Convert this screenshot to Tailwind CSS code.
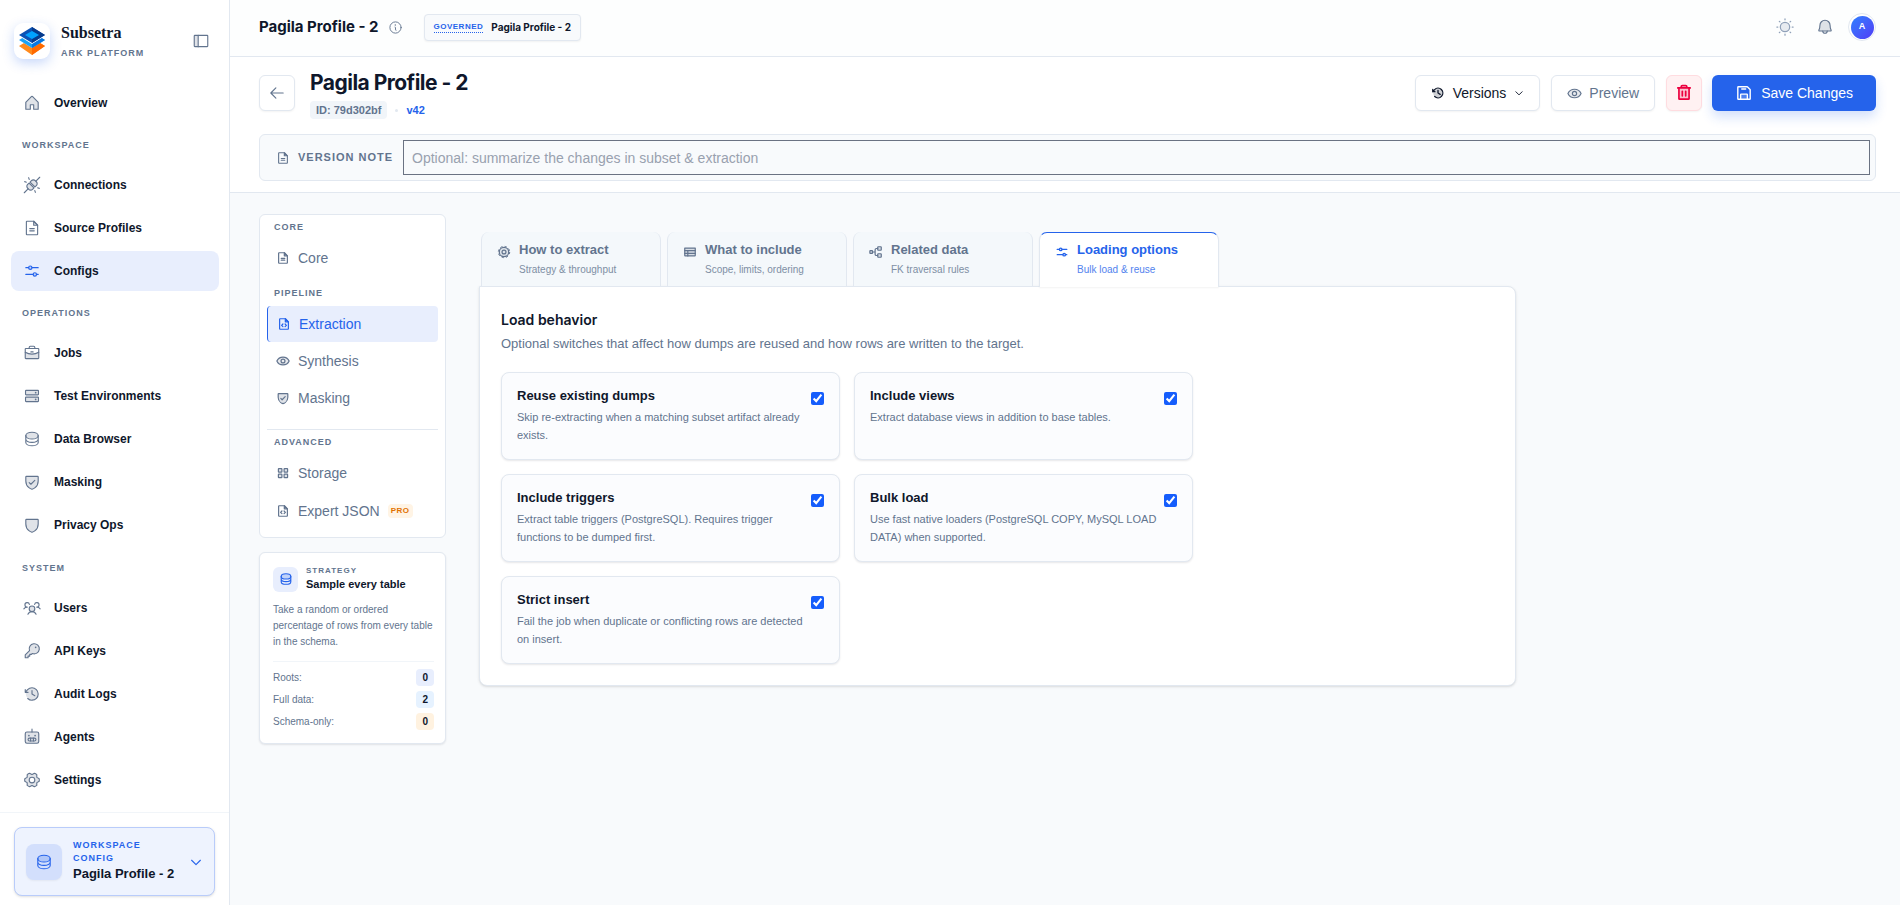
<!DOCTYPE html>
<html lang="en">
  <head>
    <meta charset="UTF-8">
    <meta name="viewport" content="width=device-width, initial-scale=1.0">
    <title>Pagila Profile - 2 | Subsetra</title>
    <script src="https://cdn.jsdelivr.net/npm/@tailwindcss/browser@4"></script>
  </head>
  <body class="flex min-h-screen bg-[#f8fafc] fill-none stroke-current font-['Liberation_Sans',Arial,sans-serif] text-slate-900 [stroke-linecap:round] [stroke-linejoin:round] [stroke-width:16]">

    <!-- icon sprite, stroke settings are inherited from body -->
    <svg class="hidden">
      <symbol id="house" viewBox="0 0 256 256">
        <path fill="currentColor" fill-opacity=".2" d="M104 216v-64h48v64h64v-96a8 8 0 0 0-2.34-5.66l-80-80a8 8 0 0 0-11.32 0l-80 80A8 8 0 0 0 40 120v96Z"/>
      </symbol>
      <symbol id="plugs" viewBox="0 0 256 256">
        <path fill="currentColor" fill-opacity=".2" d="M86 100l70 70-20 20a38 38 0 0 1-54 0l-16-16a38 38 0 0 1 0-54ZM100 86l70 70 20-20a38 38 0 0 0 0-54l-16-16a38 38 0 0 0-54 0Z"/>
        <path d="M72 184l-54 54M184 72l54-54M88 48L80 24M48 88l-24-8M208 168l24 8M168 208l8 24"/>
      </symbol>
      <symbol id="file-text" viewBox="0 0 256 256">
        <path fill="currentColor" fill-opacity=".2" d="M152 32v56h56Z"/>
        <path d="M200 224H56a8 8 0 0 1-8-8V40a8 8 0 0 1 8-8h96l56 56v128a8 8 0 0 1-8 8ZM96 136h64M96 168h64"/>
      </symbol>
      <symbol id="file-code" viewBox="0 0 256 256">
        <path fill="currentColor" fill-opacity=".2" d="M152 32v56h56Z"/>
        <path d="M200 224H56a8 8 0 0 1-8-8V40a8 8 0 0 1 8-8h96l56 56v128a8 8 0 0 1-8 8ZM148 128l24 24-24 24M108 128l-24 24 24 24"/>
      </symbol>
      <symbol id="sliders" viewBox="0 0 256 256">
        <circle cx="104" cy="80" r="24" fill="currentColor" fill-opacity=".2"/>
        <circle cx="168" cy="176" r="24" fill="currentColor" fill-opacity=".2"/>
        <path d="M128 80h88M40 80h40M192 176h24M40 176h104"/>
      </symbol>
      <symbol id="briefcase" viewBox="0 0 256 256">
        <path stroke="none" fill="currentColor" fill-opacity=".2" d="M128 144a191 191 0 0 1-96-26V200a8 8 0 0 0 8 8h176a8 8 0 0 0 8-8v-82A191 191 0 0 1 128 144Z"/>
        <rect x="32" y="64" width="192" height="144" rx="8"/>
        <path d="M168 64V48a16 16 0 0 0-16-16h-48a16 16 0 0 0-16 16v16M224 118A191 191 0 0 1 128 144a191 191 0 0 1-96-26M112 112h32"/>
      </symbol>
      <symbol id="drives" viewBox="0 0 256 256">
        <rect x="36" y="144" width="184" height="64" rx="8" fill="currentColor" fill-opacity=".2"/>
        <rect x="36" y="48" width="184" height="64" rx="8" fill="currentColor" fill-opacity=".2"/>
        <circle cx="180" cy="80" r="12" stroke="none" fill="currentColor"/>
        <circle cx="180" cy="176" r="12" stroke="none" fill="currentColor"/>
      </symbol>
      <symbol id="database" viewBox="0 0 256 256">
        <ellipse cx="128" cy="80" rx="88" ry="48" fill="currentColor" fill-opacity=".2"/>
        <path d="M40 80v48c0 26.500 39.400 48 88 48s88-21.500 88-48V80M40 128v48c0 26.500 39.400 48 88 48s88-21.500 88-48v-48"/>
      </symbol>
      <symbol id="shield" viewBox="0 0 256 256">
        <path fill="currentColor" fill-opacity=".2" d="M216 112V56a8 8 0 0 0-8-8H48a8 8 0 0 0-8 8v56c0 96 88 120 88 120s88-24 88-120Z"/>
      </symbol>
      <symbol id="shield-check" viewBox="0 0 256 256">
        <path fill="currentColor" fill-opacity=".2" d="M216 112V56a8 8 0 0 0-8-8H48a8 8 0 0 0-8 8v56c0 96 88 120 88 120s88-24 88-120Z"/>
        <path d="M88 136l24 24 56-56"/>
      </symbol>
      <symbol id="users" viewBox="0 0 256 256">
        <circle cx="128" cy="140" r="40" fill="currentColor" fill-opacity=".2"/>
        <path d="M196 116a60 60 0 0 1 48 24M12 140a60 60 0 0 1 48-24M70 216a64 64 0 0 1 116 0M60 116a32 32 0 1 1 31-38M165 78A32 32 0 1 1 196 116"/>
      </symbol>
      <symbol id="key" viewBox="0 0 256 256">
        <path fill="currentColor" fill-opacity=".2" d="M93 123a72 72 0 1 1 40 40L120 176H96v24H72v24H32v-40Z"/>
        <circle cx="180" cy="76" r="12" stroke="none" fill="currentColor"/>
      </symbol>
      <symbol id="history" viewBox="0 0 256 256">
        <circle cx="128" cy="128" r="88" stroke="none" fill="currentColor" fill-opacity=".2"/>
        <path d="M128 80v48l40 24M72 104H32V64M67.600 192A88 88 0 1 0 65.770 65.770C54 77.690 44.280 88.930 32 104"/>
      </symbol>
      <symbol id="robot" viewBox="0 0 256 256">
        <rect x="32" y="56" width="192" height="160" rx="24" fill="currentColor" fill-opacity=".2"/>
        <rect x="72" y="144" width="112" height="40" rx="20"/>
        <path d="M148 144v40M108 144v40M128 56V16"/>
        <circle cx="84" cy="108" r="12" stroke="none" fill="currentColor"/>
        <circle cx="172" cy="108" r="12" stroke="none" fill="currentColor"/>
      </symbol>
      <symbol id="gear" viewBox="0 0 256 256">
        <path fill="currentColor" fill-opacity=".2" fill-rule="evenodd" d="M130.050 206.110c-1.340 0-2.690 0-4 0L94 224a104.610 104.610 0 0 1-34.110-19.200l-.12-36c-.71-1.120-1.380-2.250-2-3.410L25.900 147.240a99.150 99.150 0 0 1 0-38.460l31.840-18.100c.65-1.150 1.320-2.290 2-3.410l.16-36A104.580 104.580 0 0 1 94 32l32 17.890c1.340 0 2.690 0 4 0L162 32a104.610 104.610 0 0 1 34.110 19.200l.12 36c.71 1.120 1.380 2.250 2 3.410l31.850 18.140a99.150 99.150 0 0 1 0 38.460l-31.840 18.100c-.65 1.150-1.320 2.290-2 3.410l-.16 36A104.580 104.580 0 0 1 162 224ZM128 88a40 40 0 1 0 0 80a40 40 0 1 0 0-80Z"/>
      </symbol>
      <symbol id="cog" viewBox="0 0 256 256">
        <circle cx="128" cy="128" r="86" fill="currentColor" fill-opacity=".15"/>
        <circle cx="128" cy="128" r="104" stroke-width="18" stroke-dasharray="40 41.680" stroke-linecap="butt"/>
        <circle cx="128" cy="128" r="36"/>
      </symbol>
      <symbol id="table" viewBox="0 0 256 256">
        <path fill="currentColor" fill-opacity=".2" d="M32 56h192v136a8 8 0 0 1-8 8H40a8 8 0 0 1-8-8Z"/>
        <path d="M32 104h192M32 152h192M88 104v96"/>
      </symbol>
      <symbol id="tree" viewBox="0 0 256 256">
        <rect x="160" y="32" width="64" height="64" rx="8" fill="currentColor" fill-opacity=".2"/>
        <rect x="160" y="160" width="64" height="64" rx="8" fill="currentColor" fill-opacity=".2"/>
        <rect x="16" y="104" width="48" height="48" rx="8" fill="currentColor" fill-opacity=".2"/>
        <path d="M64 128h48M160 192h-24a24 24 0 0 1-24-24V88a24 24 0 0 1 24-24h24"/>
      </symbol>
      <symbol id="squares" viewBox="0 0 256 256">
        <rect x="44" y="48" width="64" height="64" rx="8" fill="currentColor" fill-opacity=".2"/>
        <rect x="148" y="48" width="64" height="64" rx="8" fill="currentColor" fill-opacity=".2"/>
        <rect x="44" y="148" width="64" height="64" rx="8" fill="currentColor" fill-opacity=".2"/>
        <rect x="148" y="148" width="64" height="64" rx="8" fill="currentColor" fill-opacity=".2"/>
      </symbol>
      <symbol id="eye" viewBox="0 0 256 256">
        <path fill="currentColor" fill-opacity=".15" d="M128 56C48 56 16 128 16 128s32 72 112 72 112-72 112-72-32-72-112-72Z"/>
        <circle cx="128" cy="128" r="36"/>
      </symbol>
      <symbol id="trash" viewBox="0 0 256 256">
        <path fill="currentColor" fill-opacity=".2" d="M200 56v152a8 8 0 0 1-8 8H64a8 8 0 0 1-8-8V56"/>
        <path d="M216 56H40M104 104v64M152 104v64M168 56V40a16 16 0 0 0-16-16h-48a16 16 0 0 0-16 16v16"/>
      </symbol>
      <symbol id="floppy" viewBox="0 0 256 256">
        <path d="M216 83V208a8 8 0 0 1-8 8H48a8 8 0 0 1-8-8V48a8 8 0 0 1 8-8h125a8 8 0 0 1 6 2l35 36a8 8 0 0 1 2 5Z"/>
        <path fill="currentColor" fill-opacity=".2" d="M80 216v-64a8 8 0 0 1 8-8h80a8 8 0 0 1 8 8v64"/>
        <path d="M152 72H96"/>
      </symbol>
      <symbol id="sun" viewBox="0 0 256 256">
        <circle cx="128" cy="128" r="60" fill="currentColor" fill-opacity=".2"/>
        <path d="M128 36V24M128 232v-12M36 128H24M232 128h-12M63 63l-7-7M63 193l-7 7M193 63l7-7M193 193l7 7"/>
      </symbol>
      <symbol id="bell" viewBox="0 0 256 256">
        <path fill="currentColor" fill-opacity=".2" d="M56 104a72 72 0 0 1 144 0c0 35.820 8.300 56.600 14.900 68A8 8 0 0 1 208 184H48a8 8 0 0 1-6.880-12C47.710 160.600 56 139.810 56 104Z"/>
        <path d="M96 184a32 32 0 0 0 64 0"/>
      </symbol>
      <symbol id="info" viewBox="0 0 256 256">
        <circle cx="128" cy="128" r="96"/>
        <path d="M120 120a8 8 0 0 1 8 8v40a8 8 0 0 0 8 8"/>
        <circle cx="124" cy="84" r="12" stroke="none" fill="currentColor"/>
      </symbol>
      <symbol id="panel" viewBox="0 0 256 256">
        <path stroke="none" fill="currentColor" fill-opacity=".2" d="M32 48h56v160H32Z"/>
        <rect x="32" y="48" width="192" height="160" rx="8"/>
        <path d="M88 48v160"/>
      </symbol>
      <symbol id="arrow-left" viewBox="0 0 256 256">
        <path d="M216 128H40M112 56l-72 72 72 72"/>
      </symbol>
      <symbol id="caret" viewBox="0 0 256 256">
        <path d="M208 96l-80 80-80-80"/>
      </symbol>
    </svg>

    <!-- sidebar -->
    <aside class="flex w-[230px] shrink-0 flex-col border-r border-slate-200 bg-white">
      <div class="flex items-start px-[14px] pt-[23px]">
        <span class="flex size-9 items-center justify-center rounded-[9px] bg-white shadow-[0_4px_12px_rgba(37,99,235,0.25)]">
          <svg class="h-7 w-[26px] stroke-none" viewBox="0 0 26 28">
            <path fill="#ff8a1c" d="M0 19l5-3 8 5 8-5 5 3-13 9Z"/>
            <path fill="#ff6a00" d="M13 21l8-5 5 3-13 9Z"/>
            <path fill="#1ba3f5" d="M0 13l5-3 8 5 8-5 5 3-13 8Z"/>
            <path fill="#0877e0" d="M13 15l8-5 5 3-13 8Z"/>
            <path fill="#fff" d="M0 9l13 8 13-8v-1H0Z"/>
            <path fill="#0a52b5" d="M13 0l13 8-13 8L0 8Z"/>
            <path fill="#063a8c" d="M13 0l13 8-13 8v-4l6-4-6-4Z"/>
            <path fill="#00a2ff" d="M13 4l7 4-7 4-7-4Z"/>
          </svg>
        </span>
        <div class="ml-[11px] flex-1">
          <p class="font-['Liberation_Serif',serif] text-base leading-5 font-bold">Subsetra</p>
          <p class="text-[9px] leading-5 font-bold tracking-[1px] text-slate-500">ARK PLATFORM</p>
        </div>
        <button class="mt-[5px] mr-px p-1 text-slate-500" aria-label="Collapse sidebar"><svg class="size-[18px]"><use href="#panel"/></svg></button>
      </div>

      <nav class="mt-[20px] flex flex-1 flex-col pr-[10px] pl-[11px] text-[12px] font-bold" aria-label="Main">
        <a href="#" class="flex h-10 items-center gap-[13px] rounded-lg px-[12px]"><svg class="size-[18px] text-slate-500"><use href="#house"/></svg>Overview</a>

        <h2 class="flex h-[42px] items-center px-[11px] pt-1 text-[9px] tracking-[1px] text-slate-500">WORKSPACE</h2>
        <div class="flex flex-col gap-[3px]">
          <a href="#" class="flex h-10 items-center gap-[13px] rounded-lg px-[12px]"><svg class="size-[18px] text-slate-500"><use href="#plugs"/></svg>Connections</a>
          <a href="#" class="flex h-10 items-center gap-[13px] rounded-lg px-[12px]"><svg class="size-[18px] text-slate-500"><use href="#file-text"/></svg>Source Profiles</a>
          <a href="#" class="flex h-10 items-center gap-[13px] rounded-lg bg-[#e8eefd] px-[12px]" aria-current="page"><svg class="size-[18px] text-[#2563eb]"><use href="#sliders"/></svg>Configs</a>
        </div>

        <h2 class="flex h-[42px] items-center px-[11px] pt-1 text-[9px] tracking-[1px] text-slate-500">OPERATIONS</h2>
        <div class="flex flex-col gap-[3px]">
          <a href="#" class="flex h-10 items-center gap-[13px] rounded-lg px-[12px]"><svg class="size-[18px] text-slate-500"><use href="#briefcase"/></svg>Jobs</a>
          <a href="#" class="flex h-10 items-center gap-[13px] rounded-lg px-[12px]"><svg class="size-[18px] text-slate-500"><use href="#drives"/></svg>Test Environments</a>
          <a href="#" class="flex h-10 items-center gap-[13px] rounded-lg px-[12px]"><svg class="size-[18px] text-slate-500"><use href="#database"/></svg>Data Browser</a>
          <a href="#" class="flex h-10 items-center gap-[13px] rounded-lg px-[12px]"><svg class="size-[18px] text-slate-500"><use href="#shield-check"/></svg>Masking</a>
          <a href="#" class="flex h-10 items-center gap-[13px] rounded-lg px-[12px]"><svg class="size-[18px] text-slate-500"><use href="#shield"/></svg>Privacy Ops</a>
        </div>

        <h2 class="flex h-[43px] items-center px-[11px] pt-1 text-[9px] tracking-[1px] text-slate-500">SYSTEM</h2>
        <div class="flex flex-col gap-[3px]">
          <a href="#" class="flex h-10 items-center gap-[13px] rounded-lg px-[12px]"><svg class="size-[18px] text-slate-500"><use href="#users"/></svg>Users</a>
          <a href="#" class="flex h-10 items-center gap-[13px] rounded-lg px-[12px]"><svg class="size-[18px] text-slate-500"><use href="#key"/></svg>API Keys</a>
          <a href="#" class="flex h-10 items-center gap-[13px] rounded-lg px-[12px]"><svg class="size-[18px] text-slate-500"><use href="#history"/></svg>Audit Logs</a>
          <a href="#" class="flex h-10 items-center gap-[13px] rounded-lg px-[12px]"><svg class="size-[18px] text-slate-500"><use href="#robot"/></svg>Agents</a>
          <a href="#" class="flex h-10 items-center gap-[13px] rounded-lg px-[12px]"><svg class="size-[18px] text-slate-500"><use href="#gear"/></svg>Settings</a>
        </div>
      </nav>

      <div class="border-t border-slate-100 px-[14px] pt-[14px] pb-[9px]">
        <button class="flex h-[69px] w-full items-center rounded-lg border border-[#b9ccfa] bg-[#eef3fe] px-[11px] text-left shadow-sm">
          <span class="flex size-9 items-center justify-center rounded-lg bg-[#d3dffc] text-[#2563eb] shadow-xs"><svg class="size-[18px]"><use href="#database"/></svg></span>
          <span class="ml-[11px] flex-1 pb-[2px]">
            <span class="block w-20 text-[9px] leading-[13px] font-bold tracking-[1px] text-[#2563eb]">WORKSPACE CONFIG</span>
            <span class="block text-[13px] leading-[18px] font-bold">Pagila Profile - 2</span>
          </span>
          <svg class="size-[14px] text-[#2563eb] [stroke-width:20]"><use href="#caret"/></svg>
        </button>
      </div>
    </aside>

    <div class="flex min-w-0 flex-1 flex-col">
      <!-- top bar -->
      <header class="flex h-[57px] items-center border-b border-slate-200 bg-[#fdfefe] pr-6 pb-[2px] pl-[29px]">
        <p class="font-[Inter,sans-serif] text-[15px] font-bold">Pagila Profile - 2</p>
        <svg class="ml-[9px] size-[15px] text-slate-500"><use href="#info"/></svg>
        <div class="ml-[21px] flex h-[27px] items-center gap-2 rounded border border-slate-200 bg-slate-50 px-[9px] font-bold shadow-xs">
          <span class="border-b border-dotted border-[#2563eb] text-[8px] leading-[11px] tracking-[.5px] text-[#2563eb]">GOVERNED</span>
          <span class="font-[Inter,sans-serif] text-[10px]">Pagila Profile - 2</span>
        </div>
        <div class="ml-auto flex items-center">
          <button class="p-1 text-slate-400" aria-label="Theme"><svg class="size-5"><use href="#sun"/></svg></button>
          <button class="ml-[13px] p-1 text-slate-500" aria-label="Notifications"><svg class="size-[18px]"><use href="#bell"/></svg></button>
          <button class="ml-[10px] flex size-7 items-center justify-center rounded-full border border-slate-200 bg-white" aria-label="Account">
            <span class="flex size-[23px] items-center justify-center rounded-full bg-linear-to-br from-[#2b7fff] to-[#4f39f6] text-[9px] font-bold text-white">A</span>
          </button>
        </div>
      </header>

      <!-- profile header -->
      <section class="border-b border-slate-200 bg-white pt-3 pr-6 pb-[11px] pl-[29px]">
        <div class="flex items-start">
          <button class="mt-[6px] flex size-9 items-center justify-center rounded-md border border-slate-200 bg-white text-slate-500 shadow-xs" aria-label="Back"><svg class="size-[18px]"><use href="#arrow-left"/></svg></button>
          <div class="ml-[15px]">
            <h1 class="font-[Inter,sans-serif] text-[21px] leading-[28px] font-bold tracking-tight">Pagila Profile - 2</h1>
            <p class="mt-1 flex items-center gap-2 text-[11px] font-bold">
              <span class="flex h-[18px] items-center rounded bg-slate-100 px-[6px] text-slate-500">ID: 79d302bf</span>
              <span class="size-[3px] rounded-full bg-slate-200"></span>
              <span class="text-[#2563eb]">v42</span>
            </p>
          </div>
          <div class="mt-[6px] ml-auto flex text-[14px]">
            <button class="flex h-9 items-center rounded-md border border-slate-200 bg-white px-[15px] shadow-xs"><svg class="mr-2 size-[14px] [stroke-width:24]"><use href="#history"/></svg>Versions<svg class="ml-2 size-[10px] [stroke-width:24]"><use href="#caret"/></svg></button>
            <button class="ml-[11px] flex h-9 items-center rounded-md border border-slate-200 bg-white px-[15px] text-slate-500 shadow-xs"><svg class="mr-[7px] size-[15px] [stroke-width:20]"><use href="#eye"/></svg>Preview</button>
            <button class="ml-[11px] flex size-9 items-center justify-center rounded-md border border-[#ffdce0] bg-[#fff1f2] text-rose-600 shadow-xs" aria-label="Delete"><svg class="size-[18px] [stroke-width:24]"><use href="#trash"/></svg></button>
            <button class="ml-[10px] flex h-9 items-center rounded-md bg-[#2563eb] px-[23px] text-white shadow-[0_6px_12px_rgba(37,99,235,0.2)]"><svg class="mr-2 size-[18px] [stroke-width:20]"><use href="#floppy"/></svg>Save Changes</button>
          </div>
        </div>

        <div class="mt-[15px] flex h-[47px] items-center rounded-md border border-slate-200 bg-slate-50 pr-[5px] pl-4 text-slate-500">
          <svg class="size-[14px] [stroke-width:20]"><use href="#file-text"/></svg>
          <label for="note" class="ml-2 w-[105px] text-[11px] font-bold tracking-[1px] whitespace-nowrap">VERSION NOTE</label>
          <input id="note" type="text" placeholder="Optional: summarize the changes in subset &amp; extraction" class="h-[35px] min-w-0 flex-1 border border-gray-500 bg-transparent px-2 text-[14px] outline-none placeholder:text-gray-400">
        </div>
      </section>

      <main class="flex flex-1 items-start pt-[21px] pl-[29px]">
        <div class="flex w-[187px] shrink-0 flex-col gap-[14px]">
          <!-- section navigation -->
          <nav class="rounded-md border border-slate-200 bg-white px-[7px] pt-px pb-2 text-[14px] text-slate-500 [stroke-width:22]" aria-label="Profile sections">
            <h2 class="flex h-6 items-center px-[7px] text-[9px] font-bold tracking-[1px]">CORE</h2>
            <a href="#" class="flex h-9 items-center gap-2 px-[9px]"><svg class="size-[14px]"><use href="#file-text"/></svg>Core</a>
            <h2 class="mt-[6px] flex h-6 items-center px-[7px] text-[9px] font-bold tracking-[1px]">PIPELINE</h2>
            <div class="flex flex-col gap-px">
              <a href="#" class="flex h-9 items-center gap-2 rounded border-l border-[#2563eb] bg-[#e8eefd] px-[9px] text-[#2563eb]" aria-current="true"><svg class="size-[14px]"><use href="#file-code"/></svg>Extraction</a>
              <a href="#" class="flex h-9 items-center gap-2 px-[9px]"><svg class="size-[14px]"><use href="#eye"/></svg>Synthesis</a>
              <a href="#" class="flex h-9 items-center gap-2 px-[9px]"><svg class="size-[14px]"><use href="#shield-check"/></svg>Masking</a>
            </div>
            <h2 class="mt-[13px] flex h-[26px] items-center border-t border-slate-200 px-[7px] text-[9px] font-bold tracking-[1px]">ADVANCED</h2>
            <div class="flex flex-col gap-[2px]">
              <a href="#" class="flex h-9 items-center gap-2 px-[9px]"><svg class="size-[14px]"><use href="#squares"/></svg>Storage</a>
              <a href="#" class="flex h-9 items-center gap-2 px-[9px]"><svg class="size-[14px]"><use href="#file-code"/></svg>Expert JSON<span class="rounded bg-[#fff4e5] px-[3px] text-[8px] leading-[14px] font-bold tracking-[.5px] text-amber-600">PRO</span></a>
            </div>
          </nav>

          <!-- strategy summary -->
          <section class="rounded-md border border-slate-200 bg-white py-[13px] pr-[11px] pl-[13px] text-slate-500 shadow-[0_1px_2px_rgba(15,23,42,0.1)]">
            <div class="flex items-center">
              <span class="flex size-[25px] items-center justify-center rounded-md bg-[#e8eefd] text-[#2563eb]"><svg class="size-[14px] [stroke-width:20]"><use href="#database"/></svg></span>
              <div class="ml-2">
                <p class="text-[8px] leading-[10px] font-bold tracking-[1px]">STRATEGY</p>
                <p class="text-[11px] leading-[16px] font-bold text-slate-900">Sample every table</p>
              </div>
            </div>
            <p class="mt-[10px] text-[10px] leading-4">Take a random or ordered percentage of rows from every table in the schema.</p>
            <dl class="mt-[11px] flex flex-col gap-[5px] border-t border-slate-100 pt-[7px] text-[10px]">
              <div class="flex items-center justify-between"><dt>Roots:</dt><dd class="rounded bg-[#e8eefd] px-[6px] leading-[17px] font-bold text-slate-900">0</dd></div>
              <div class="flex items-center justify-between"><dt>Full data:</dt><dd class="rounded bg-[#e6f2ff] px-[6px] leading-[17px] font-bold text-slate-900">2</dd></div>
              <div class="flex items-center justify-between"><dt>Schema-only:</dt><dd class="rounded bg-[#fff2e0] px-[6px] leading-[17px] font-bold text-slate-900">0</dd></div>
            </dl>
          </section>
        </div>

        <div class="mt-[18px] ml-[33px] w-full max-w-[1037px]">
          <div class="flex gap-[6px] px-[2px] [stroke-width:22]" role="tablist">
            <button role="tab" class="flex h-[54px] w-[180px] items-start rounded-t-lg border-x border-slate-200 bg-[#f4f8fb] pt-[10px] pl-[15px] text-left text-slate-500">
              <svg class="mt-[3px] mr-2 size-[14px]"><use href="#cog"/></svg>
              <span><span class="block text-[13px] leading-4 font-bold">How to extract</span><span class="mt-[5px] block text-[10px] leading-[14px] opacity-80">Strategy &amp; throughput</span></span>
            </button>
            <button role="tab" class="flex h-[54px] w-[180px] items-start rounded-t-lg border-x border-slate-200 bg-[#f4f8fb] pt-[10px] pl-[15px] text-left text-slate-500">
              <svg class="mt-[3px] mr-2 size-[14px]"><use href="#table"/></svg>
              <span><span class="block text-[13px] leading-4 font-bold">What to include</span><span class="mt-[5px] block text-[10px] leading-[14px] opacity-80">Scope, limits, ordering</span></span>
            </button>
            <button role="tab" class="flex h-[54px] w-[180px] items-start rounded-t-lg border-x border-slate-200 bg-[#f4f8fb] pt-[10px] pl-[15px] text-left text-slate-500">
              <svg class="mt-[3px] mr-2 size-[14px]"><use href="#tree"/></svg>
              <span><span class="block text-[13px] leading-4 font-bold">Related data</span><span class="mt-[5px] block text-[10px] leading-[14px] opacity-80">FK traversal rules</span></span>
            </button>
            <button role="tab" aria-selected="true" class="z-10 -mb-px flex h-[55px] w-[180px] items-start rounded-t-lg border-x border-t border-x-slate-200 border-t-[#2563eb] bg-white pt-[9px] pl-[15px] text-left text-[#2563eb] shadow-xs">
              <svg class="mt-[3px] mr-2 size-[14px]"><use href="#sliders"/></svg>
              <span><span class="block text-[13px] leading-4 font-bold">Loading options</span><span class="mt-[5px] block text-[10px] leading-[14px] opacity-80">Bulk load &amp; reuse</span></span>
            </button>
          </div>

          <section role="tabpanel" class="rounded-lg rounded-tl-none border border-slate-200 bg-white px-[21px] pt-6 pb-[21px] shadow-sm">
            <h2 class="font-[Inter,sans-serif] text-[14px] leading-[18px] font-semibold">Load behavior</h2>
            <p class="mt-[6px] text-[13px] leading-[18px] text-slate-500">Optional switches that affect how dumps are reused and how rows are written to the target.</p>

            <div class="mt-[19px] grid max-w-[692px] grid-cols-2 gap-[14px]">
              <label class="flex h-[88px] justify-between rounded-lg border border-slate-200 bg-[#fbfcfe] px-[15px] pt-[14px] shadow-[0_1px_2px_rgba(15,23,42,0.1)]">
                <span><span class="block text-[13px] leading-[18px] font-bold">Reuse existing dumps</span><span class="mt-[3px] block max-w-[290px] text-[11px] leading-[18px] text-slate-500">Skip re-extracting when a matching subset artifact already exists.</span></span>
                <input type="checkbox" checked class="mt-[5px] size-[13px] shrink-0 accent-[#155dfc]">
              </label>
              <label class="flex h-[88px] justify-between rounded-lg border border-slate-200 bg-[#fbfcfe] px-[15px] pt-[14px] shadow-[0_1px_2px_rgba(15,23,42,0.1)]">
                <span><span class="block text-[13px] leading-[18px] font-bold">Include views</span><span class="mt-[3px] block max-w-[290px] text-[11px] leading-[18px] text-slate-500">Extract database views in addition to base tables.</span></span>
                <input type="checkbox" checked class="mt-[5px] size-[13px] shrink-0 accent-[#155dfc]">
              </label>
              <label class="flex h-[88px] justify-between rounded-lg border border-slate-200 bg-[#fbfcfe] px-[15px] pt-[14px] shadow-[0_1px_2px_rgba(15,23,42,0.1)]">
                <span><span class="block text-[13px] leading-[18px] font-bold">Include triggers</span><span class="mt-[3px] block max-w-[290px] text-[11px] leading-[18px] text-slate-500">Extract table triggers (PostgreSQL). Requires trigger functions to be dumped first.</span></span>
                <input type="checkbox" checked class="mt-[5px] size-[13px] shrink-0 accent-[#155dfc]">
              </label>
              <label class="flex h-[88px] justify-between rounded-lg border border-slate-200 bg-[#fbfcfe] px-[15px] pt-[14px] shadow-[0_1px_2px_rgba(15,23,42,0.1)]">
                <span><span class="block text-[13px] leading-[18px] font-bold">Bulk load</span><span class="mt-[3px] block max-w-[290px] text-[11px] leading-[18px] text-slate-500">Use fast native loaders (PostgreSQL COPY, MySQL LOAD DATA) when supported.</span></span>
                <input type="checkbox" checked class="mt-[5px] size-[13px] shrink-0 accent-[#155dfc]">
              </label>
              <label class="flex h-[88px] justify-between rounded-lg border border-slate-200 bg-[#fbfcfe] px-[15px] pt-[14px] shadow-[0_1px_2px_rgba(15,23,42,0.1)]">
                <span><span class="block text-[13px] leading-[18px] font-bold">Strict insert</span><span class="mt-[3px] block max-w-[290px] text-[11px] leading-[18px] text-slate-500">Fail the job when duplicate or conflicting rows are detected on insert.</span></span>
                <input type="checkbox" checked class="mt-[5px] size-[13px] shrink-0 accent-[#155dfc]">
              </label>
            </div>
          </section>
        </div>
      </main>
    </div>
  </body>
</html>
